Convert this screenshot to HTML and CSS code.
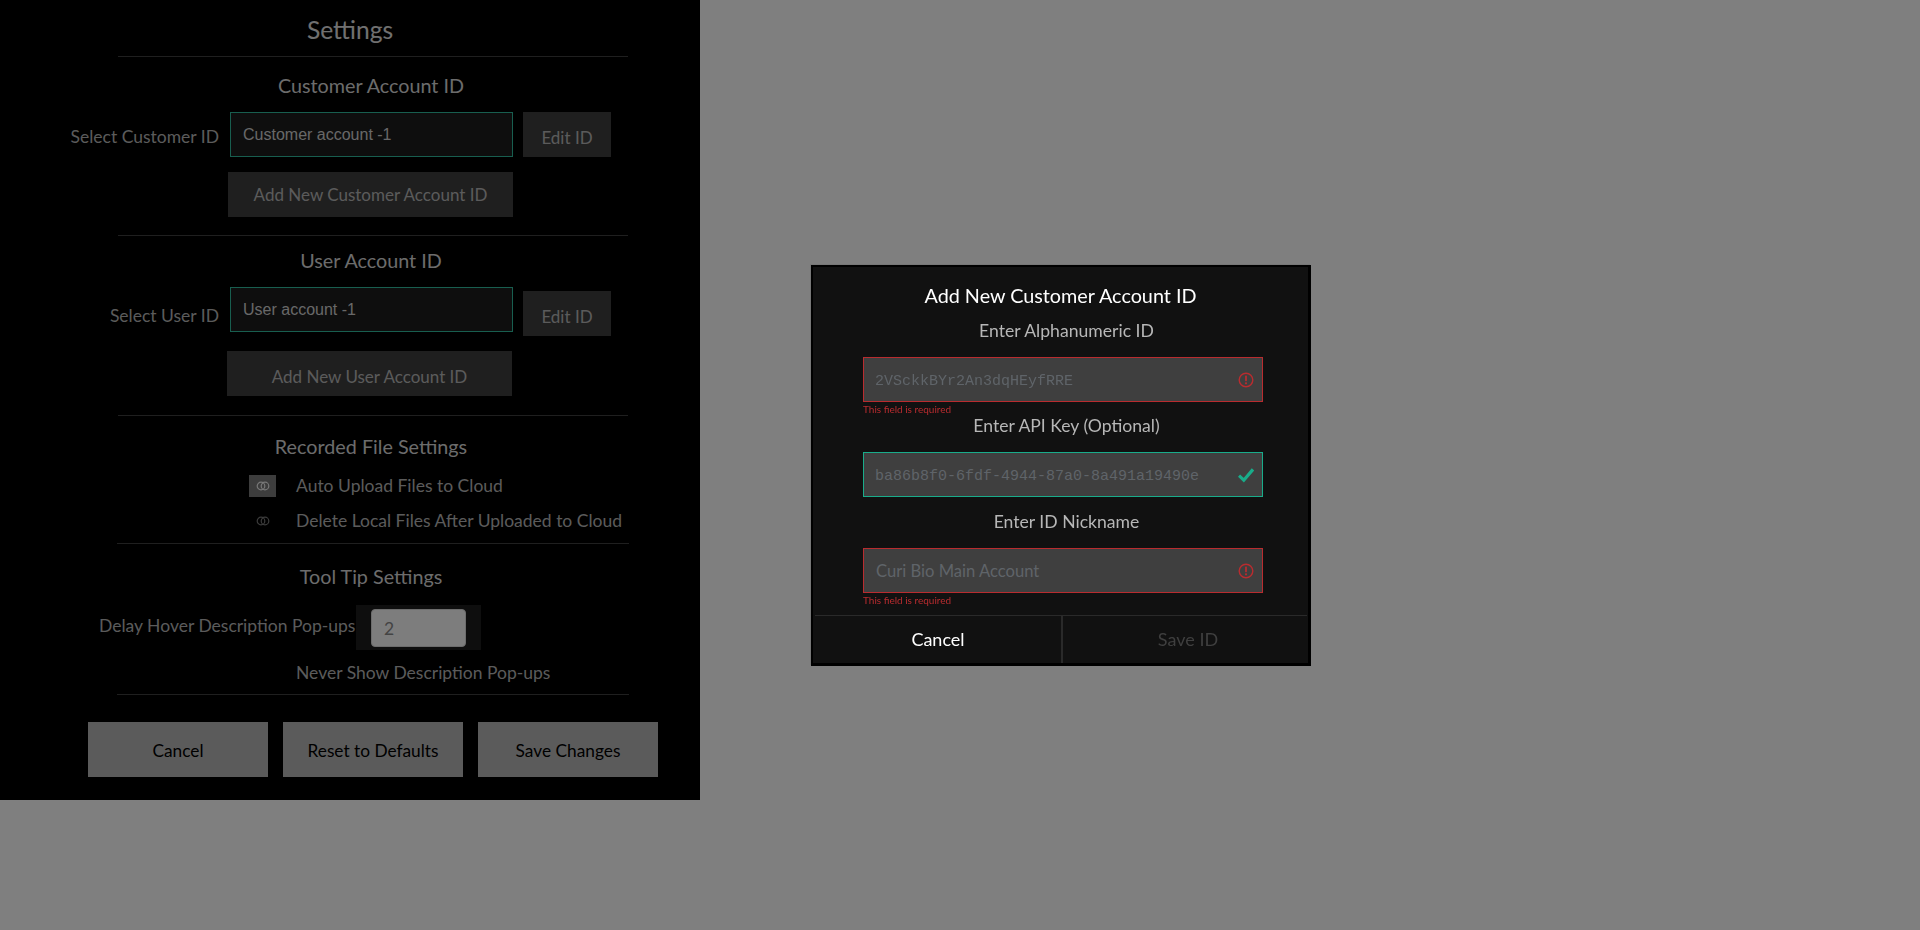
FILE: index.html
```html
<!DOCTYPE html>
<html lang="en">
<head>
  <meta charset="UTF-8" />
  <meta name="viewport" content="width=device-width, initial-scale=1.0" />
  <title>Settings</title>
  <link rel="stylesheet" href="styles.css">
</head>
<body>
  <!-- Settings panel, dimmed by the overlay below -->
  <main class="panel">
    <h1 class="panel-title">Settings</h1>
    <hr class="divider">

    <section class="section customer">
      <h2 class="section-title">Customer Account ID</h2>
      <div class="id-row">
        <label class="row-label">Select Customer ID</label>
        <div class="id-select">Customer account -1</div>
        <button class="btn-dark btn-edit">Edit ID</button>
      </div>
      <button class="btn-dark btn-add">Add New Customer Account ID</button>
    </section>
    <hr class="divider">

    <section class="section user">
      <h2 class="section-title">User Account ID</h2>
      <div class="id-row">
        <label class="row-label">Select User ID</label>
        <div class="id-select">User account -1</div>
        <button class="btn-dark btn-edit">Edit ID</button>
      </div>
      <button class="btn-dark btn-add">Add New User Account ID</button>
    </section>
    <hr class="divider">

    <section class="section files">
      <h2 class="section-title">Recorded File Settings</h2>
      <div class="check-row">
        <span class="toggle toggle-on">
          <svg width="14" height="10" viewBox="0 0 14 10"><circle cx="5" cy="5" r="3.8"/><circle cx="9" cy="5" r="3.8"/></svg>
        </span>
        <span class="check-text">Auto Upload Files to Cloud</span>
      </div>
      <div class="check-row">
        <span class="toggle">
          <svg width="14" height="10" viewBox="0 0 14 10"><circle cx="5" cy="5" r="3.8"/><circle cx="9" cy="5" r="3.8"/></svg>
        </span>
        <span class="check-text">Delete Local Files After Uploaded to Cloud</span>
      </div>
    </section>
    <hr class="divider wide">

    <section class="section tips">
      <h2 class="section-title">Tool Tip Settings</h2>
      <div class="delay-row">
        <label class="delay-label">Delay Hover Description Pop-ups</label>
        <div class="delay-box"><div class="delay-input">2</div></div>
      </div>
      <div class="check-row never-row">
        <span class="toggle"></span>
        <span class="check-text">Never Show Description Pop-ups</span>
      </div>
    </section>
    <hr class="divider wide">

    <div class="panel-actions">
      <button class="btn-light">Cancel</button>
      <button class="btn-light">Reset to Defaults</button>
      <button class="btn-light">Save Changes</button>
    </div>
  </main>

  <div class="overlay"></div>

  <!-- Add new customer account modal -->
  <div class="modal">
    <h3 class="modal-title">Add New Customer Account ID</h3>

    <div class="field-label">Enter Alphanumeric ID</div>
    <div class="field field-bad mono">
      <span>2VSckkBYr2An3dqHEyfRRE</span>
      <svg class="field-icon" width="16" height="16" viewBox="0 0 16 16"><circle cx="8" cy="8" r="6.8" fill="none" stroke="#b92c2f" stroke-width="1.4"/><rect x="7.1" y="3.6" width="1.8" height="5.6" rx=".6" fill="#b92c2f"/><circle cx="8" cy="11.3" r="1.1" fill="#b92c2f"/></svg>
    </div>
    <div class="field-error">This field is required</div>

    <div class="field-label">Enter API Key (Optional)</div>
    <div class="field field-good mono">
      <span>ba86b8f0-6fdf-4944-87a0-8a491a19490e</span>
      <svg class="field-icon" width="16" height="16" viewBox="0 0 16 16"><path d="M1 8.6 L5.8 13.2 L15 2.4" fill="none" stroke="#19ac8a" stroke-width="3.2"/></svg>
    </div>

    <div class="field-label third">Enter ID Nickname</div>
    <div class="field field-bad">
      <span>Curi Bio Main Account</span>
      <svg class="field-icon" width="16" height="16" viewBox="0 0 16 16"><circle cx="8" cy="8" r="6.8" fill="none" stroke="#b92c2f" stroke-width="1.4"/><rect x="7.1" y="3.6" width="1.8" height="5.6" rx=".6" fill="#b92c2f"/><circle cx="8" cy="11.3" r="1.1" fill="#b92c2f"/></svg>
    </div>
    <div class="field-error">This field is required</div>

    <div class="modal-actions">
      <button class="modal-btn">Cancel</button>
      <button class="modal-btn disabled">Save ID</button>
    </div>
  </div>
</body>
</html>
```

FILE: styles.css
```css
/* Page and dim overlay */
body {
  margin: 0;
  background-color: #fff;
  font-family: Lato, "Open Sans", sans-serif;
  height: 930px;
  overflow: hidden;
}
.overlay {
  position: fixed;
  top: 0;
  left: 0;
  right: 0;
  bottom: 0;
  background-color: rgba(0, 0, 0, 0.5);
}
button {
  font-family: inherit;
  border: 0;
  padding: 0;
}

/* Settings panel */
.panel {
  width: 700px;
  height: 800px;
  background-color: #000;
  color: #b7b7b7;
  font-size: 17.5px;
  overflow: hidden;
}
.panel-title {
  margin: 0;
  height: 56px;
  color: #e0e0e0;
  font-size: 24.6px;
  font-weight: 400;
  line-height: 59px;
  text-align: center;
}
.divider {
  margin: 0 0 0 118px;
  width: 510px;
  height: 1px;
  border: 0;
  background-color: #3f3f3f;
}
.divider.wide {
  margin-left: 117px;
  width: 512px;
}
.section-title {
  margin: 0;
  width: 742px;
  height: 30px;
  color: #d8d8d8;
  font-size: 19.75px;
  font-weight: 400;
  line-height: 29px;
  text-align: center;
}
.customer { padding: 14px 0 18px; }
.user { padding: 10px 0 19px; }
.files { padding: 16px 0 11px; }
.tips { padding: 18px 0 10px; }

.id-row {
  display: flex;
  margin-top: 11px;
}
.row-label {
  width: 219px;
  padding-top: 14px;
  text-align: right;
}
.user .row-label { padding-top: 18px; }
.id-select {
  box-sizing: border-box;
  width: 283px;
  height: 45px;
  margin-left: 11px;
  padding-left: 12px;
  border: 1px solid #30bd9f;
  background-color: #1c1c1c;
  color: #d0d0d0;
  font-family: "Liberation Sans", Arial, sans-serif;
  font-size: 16px;
  line-height: 43px;
}
.btn-dark {
  background-color: #3f3f3f;
  color: #b7b7b7;
}
.btn-edit {
  width: 88px;
  height: 45px;
  margin-left: 10px;
  padding-top: 6px;
  font-size: 17px;
}
.user .btn-edit { margin-top: 4px; }
.btn-add {
  display: block;
  width: 285px;
  height: 45px;
  margin: 15px 0 0 228px;
  font-size: 17px;
}
.user .btn-add {
  margin-left: 227px;
  padding-top: 5px;
}

.check-row {
  display: flex;
  align-items: center;
  height: 22px;
  margin-top: 13px;
}
.check-text { padding-bottom: 2px; }
.toggle {
  display: flex;
  align-items: center;
  justify-content: center;
  width: 27px;
  height: 22px;
  margin: 0 20px 0 249px;
}
.toggle-on { background-color: #7a7a7a; }
.toggle svg { fill: none; stroke: #777; stroke-width: 1.2; }
.toggle-on svg { stroke: #f0f0f0; }

.delay-row {
  display: flex;
  align-items: center;
  margin-top: 13px;
}
.delay-label {
  width: 257px;
  margin-left: 99px;
  padding-bottom: 5px;
  white-space: nowrap;
}
.delay-box {
  box-sizing: border-box;
  width: 125px;
  height: 45px;
  padding: 4px 15px;
  background-color: #1c1c1c;
}
.delay-input {
  box-sizing: border-box;
  width: 95px;
  height: 38px;
  padding-left: 12px;
  border: 1px solid #d8d8d8;
  border-radius: 4px;
  background-color: #fafafa;
  color: #888;
  line-height: 38px;
}
.never-row { margin-top: 12px; }

.panel-actions {
  display: flex;
  gap: 15px;
  margin: 27px 0 0 88px;
}
.btn-light {
  width: 180px;
  height: 55px;
  padding-top: 2px;
  background-color: #b7b7b7;
  color: #000;
  font-size: 17.3px;
}

/* Modal, sits above the overlay */
.modal {
  position: fixed;
  top: 265px;
  left: 811px;
  box-sizing: border-box;
  width: 500px;
  height: 401px;
  padding-top: 1px;
  border: solid #000;
  border-width: 2px 3px 3px 2px;
  box-shadow: -1px -1px 0 #777;
  background-color: #111;
  color: #b7b7b7;
}
.modal-title {
  margin: 0;
  height: 49px;
  color: #fff;
  font-size: 19.8px;
  font-weight: 400;
  line-height: 55px;
  text-align: center;
}
.field-label {
  height: 28px;
  margin-bottom: 12px;
  padding-left: 12px;
  font-size: 17.6px;
  line-height: 28px;
  text-align: center;
}
.field-label.third { margin-top: 11px; }
.field {
  display: flex;
  align-items: center;
  box-sizing: border-box;
  position: relative;
  width: 400px;
  height: 45px;
  margin-left: 50px;
  padding-left: 12px;
  background-color: #3f3f3f;
  color: #5f6469;
  font-size: 16.6px;
}
.field.mono {
  padding: 3px 0 0 11px;
  font-family: "Liberation Mono", "DejaVu Sans Mono", monospace;
  font-size: 15px;
}
.field-bad { border: 1px solid #b92c2f; }
.field-good { border: 1px solid #19ac8a; }
.field-icon {
  position: absolute;
  top: 14px;
  right: 8px;
}
.field-error {
  height: 10px;
  margin-left: 50px;
  color: #b92c2f;
  font-size: 10px;
  line-height: 15px;
}
.modal-actions {
  display: flex;
  width: 492px;
  height: 47px;
  margin: 12px 0 0 2px;
  border-top: 1px solid #2a2a2a;
}
.modal-btn {
  width: 50%;
  padding-bottom: 2px;
  background-color: #111;
  color: #fff;
  font-size: 18px;
}
.modal-btn.disabled {
  padding-left: 6px;
  border-left: 2px solid #2a2a2a;
  color: #3f3f3f;
}
```
